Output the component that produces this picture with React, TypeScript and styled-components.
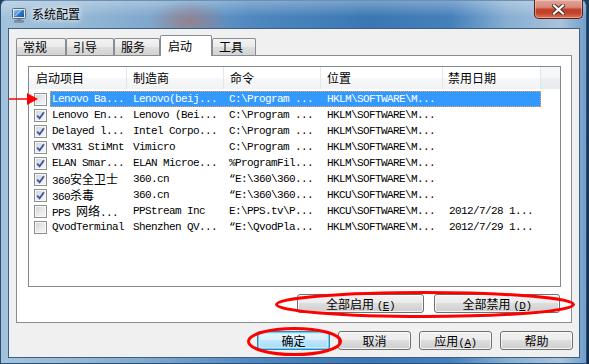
import React from "react";
import styled, { createGlobalStyle } from "styled-components";

const CJK = `"Noto Sans CJK SC", "Noto Sans", sans-serif`;
const MONO = `"Liberation Mono", "DejaVu Sans Mono", monospace`;

const GlobalStyle = createGlobalStyle`
  html, body { margin: 0; padding: 0; }
  body {
    width: 589px;
    height: 364px;
    overflow: hidden;
    background: #17324f;
    font-family: ${CJK};
  }
`;

const Desktop = styled.div`
  position: relative;
  width: 589px;
  height: 364px;
  display: flex;
  background: linear-gradient(#1d3d60, #122a45);
`;

const Window = styled.div`
  box-sizing: border-box;
  width: 587px;
  height: 364px;
  border: 1px solid #2a4f74;
  border-top-color: #6b90b3;
  border-radius: 6px 6px 0 0;
  display: flex;
  flex-direction: column;
  background:
    radial-gradient(ellipse 40px 20px at 188px 20px, rgba(176, 112, 104, 0.6), rgba(176, 112, 104, 0) 100%),
    linear-gradient(to bottom, rgba(255, 255, 255, 0.3) 0px, rgba(255, 255, 255, 0) 16px),
    linear-gradient(to right, #a3c3dd 0px, #97b9d6 70px, #7ea7cd 150px, #5088bf 250px, #3a77b3 370px, #4680ba 450px, #86add2 505px, #a9c3dc 560px, #6e9cc8 587px);
`;

const TitleBar = styled.div`
  height: 27px;
  display: flex;
  align-items: flex-start;
`;

const AppIcon = styled.svg`
  margin: 6px 0 0 10px;
  flex: none;
`;

const TitleText = styled.div`
  margin: 5px 0 0 5px;
  font: 12px/16px ${CJK};
  color: #000;
  text-shadow: 0 0 5px rgba(255, 255, 255, 0.95), 0 0 9px rgba(255, 255, 255, 0.8);
`;

const CloseButton = styled.div`
  box-sizing: border-box;
  margin: -1px 3px 0 auto;
  width: 49px;
  height: 19px;
  border: 1px solid #5a2017;
  border-top: none;
  border-radius: 0 0 5px 5px;
  background: linear-gradient(to bottom, #e2a497 0%, #d68a7b 40%, #c2432c 52%, #c14129 72%, #dc7656 100%);
  box-shadow: inset 0 0 0 1px rgba(255, 220, 210, 0.45);
  display: flex;
  align-items: center;
  justify-content: center;
`;

const Client = styled.div`
  box-sizing: border-box;
  margin-left: 7px;
  width: 572px;
  height: 330px;
  border: 1px solid #3d5f80;
  background: #f0f0f0;
  display: flex;
  flex-direction: column;
  padding: 6px 7px 0 7px;
`;

const TabStrip = styled.div`
  position: relative;
  z-index: 2;
  height: 21px;
  display: flex;
  align-items: flex-end;
`;

const Tab = styled.div<{ $w: number; $active?: boolean }>`
  box-sizing: border-box;
  width: ${(p) => p.$w}px;
  height: ${(p) => (p.$active ? 21 : 17)}px;
  margin-bottom: ${(p) => (p.$active ? 0 : 1)}px;
  padding-left: ${(p) => (p.$active ? 7 : 6)}px;
  border: 1px solid #898c95;
  border-bottom: none;
  border-radius: 2px 2px 0 0;
  background: ${(p) =>
    p.$active
      ? "#ffffff"
      : "linear-gradient(to bottom, #f3f3f3 0%, #ebebeb 50%, #dddddd 51%, #d3d3d3 100%)"};
  font: 12px/${(p) => (p.$active ? 19 : 16)}px ${CJK};
  color: #000;
`;

const Panel = styled.div`
  box-sizing: border-box;
  margin-top: -1px;
  height: 268px;
  border: 1px solid #898c95;
  background: #ffffff;
  display: flex;
  flex-direction: column;
  padding: 10px 10px 0 11px;
`;

const ListView = styled.div`
  box-sizing: border-box;
  width: 533px;
  height: 221px;
  border: 1px solid #828790;
  background: #ffffff;
  display: flex;
  flex-direction: column;
`;

const Header = styled.div`
  display: flex;
  height: 22px;
  background: linear-gradient(to bottom, #ffffff 0%, #ffffff 50%, #f7f8fa 51%, #f1f2f4 100%);
`;

const HeaderCell = styled.div<{ $w: number; $pad: number }>`
  box-sizing: border-box;
  width: ${(p) => p.$w}px;
  padding-left: ${(p) => p.$pad}px;
  border-right: 1px solid #e3e6eb;
  font: 12px/22px ${CJK};
  color: #000;
  white-space: nowrap;
`;

const HeaderFiller = styled.div`
  flex: 1;
  background: linear-gradient(to bottom, #f6f7f9 0%, #f6f7f9 50%, #eceef1 51%, #e8eaed 100%);
`;

const Rows = styled.div`
  padding-top: 2px;
  display: flex;
  flex-direction: column;
`;

const Row = styled.div`
  height: 16px;
  display: flex;
  align-items: center;
`;

const CheckCell = styled.div`
  width: 21px;
  height: 16px;
  display: flex;
  align-items: center;
  padding-left: 5px;
  box-sizing: border-box;
`;

const CheckBox = styled.span`
  box-sizing: border-box;
  width: 13px;
  height: 13px;
  border: 1px solid #8e8f8f;
  background: linear-gradient(135deg, #cdd0d5 0%, #e6e8ea 50%, #f7f7f7 100%);
  box-shadow: inset 0 0 0 1px #f8f8f8;
  display: flex;
  align-items: center;
  justify-content: center;
`;

const Cells = styled.div<{ $sel?: boolean }>`
  display: flex;
  height: 16px;
  background: ${(p) => (p.$sel ? "#3399ff" : "transparent")};
  color: ${(p) => (p.$sel ? "#ffffff" : "#000000")};
  outline: ${(p) => (p.$sel ? "1px dotted #f0a050" : "none")};
  outline-offset: -1px;
`;

const Cell = styled.div<{ $w: number; $pad: number }>`
  box-sizing: border-box;
  width: ${(p) => p.$w}px;
  padding-left: ${(p) => p.$pad}px;
  overflow: hidden;
  white-space: nowrap;
  font: 11px/16px ${MONO};
  letter-spacing: -0.6px;
`;

const Han = styled.span`
  font: 12px/16px ${CJK};
  letter-spacing: 0;
`;

const PanelButtons = styled.div`
  margin-top: 7px;
  padding-right: 1px;
  display: flex;
  justify-content: flex-end;
  gap: 10px;
`;

const BottomButtons = styled.div`
  margin: 8px -1px 0 0;
  display: flex;
  justify-content: flex-end;
  gap: 8px;
`;

const Button = styled.div<{ $w: number; $default?: boolean }>`
  box-sizing: border-box;
  width: ${(p) => p.$w}px;
  height: 19px;
  border: 1px solid ${(p) => (p.$default ? "#3c7fb1" : "#707070")};
  border-radius: 3px;
  background: ${(p) =>
    p.$default
      ? "linear-gradient(to bottom, #eaf6fd 0%, #d9f0fc 49%, #bee6fd 50%, #a7d9f5 100%)"
      : "linear-gradient(to bottom, #f2f2f2 0%, #ebebeb 49%, #dddddd 50%, #cfcfcf 100%)"};
  box-shadow: ${(p) =>
    p.$default ? "inset 0 0 0 1px #5fd3fb, inset 0 0 0 2px #c8ecfb" : "inset 0 0 0 1px rgba(255,255,255,0.75)"};
  font: 12px/17px ${CJK};
  color: #000;
  text-align: center;
  white-space: nowrap;
`;

const Key = styled.span`
  font: 11px/17px ${MONO};
  letter-spacing: -0.5px;
  u { text-underline-offset: 1px; }
`;

const Overlay = styled.svg`
  position: absolute;
  left: 0;
  top: 0;
  pointer-events: none;
`;

const COLS = [
  { w: 98, pad: 7, label: "启动项目" },
  { w: 97, pad: 6, label: "制造商" },
  { w: 97, pad: 6, label: "命令" },
  { w: 122, pad: 6, label: "位置" },
  { w: 98, pad: 5, label: "禁用日期" },
];

const CELL_W = [
  { w: 77, pad: 2 },
  { w: 97, pad: 6 },
  { w: 97, pad: 5 },
  { w: 122, pad: 6 },
  { w: 98, pad: 6 },
];

const HKLM = "HKLM\\SOFTWARE\\M...";
const HKCU = "HKCU\\SOFTWARE\\M...";

const ROWS: { on: boolean; sel?: boolean; c: string[] }[] = [
  { on: false, sel: true, c: ["Lenovo Ba...", "Lenovo(beij...", "C:\\Program ...", HKLM, ""] },
  { on: true, c: ["Lenovo En...", "Lenovo (Bei...", "C:\\Program ...", HKLM, ""] },
  { on: true, c: ["Delayed l...", "Intel Corpo...", "C:\\Program ...", HKLM, ""] },
  { on: true, c: ["VM331 StiMnt", "Vimicro", "C:\\Program ...", HKLM, ""] },
  { on: true, c: ["ELAN Smar...", "ELAN Microe...", "%ProgramFil...", HKLM, ""] },
  { on: true, c: ["360安全卫士", "360.cn", "\u201cE:\\360\\360...", HKLM, ""] },
  { on: true, c: ["360杀毒", "360.cn", "\u201cE:\\360\\360...", HKCU, ""] },
  { on: false, c: ["PPS 网络...", "PPStream Inc", "E:\\PPS.tv\\P...", HKCU, "2012/7/28 1..."] },
  { on: false, c: ["QvodTerminal", "Shenzhen QV...", "\u201cE:\\QvodPla...", HKLM, "2012/7/29 1..."] },
];

function mixed(text: string) {
  const parts = text.split(/([\u4e00-\u9fff]+)/);
  return parts.map((p, i) =>
    /[\u4e00-\u9fff]/.test(p) ? <Han key={i}>{p}</Han> : <React.Fragment key={i}>{p}</React.Fragment>
  );
}

const CheckMark = () => (
  <svg width="9" height="9" viewBox="0 0 9 9">
    <path d="M1.2 4.6 L3.6 7.3 L7.9 1.2" fill="none" stroke="#3d5a9e" strokeWidth="1.9" strokeLinejoin="miter" />
  </svg>
);

const Accel = ({ k }: { k: string }) => (
  <Key>
    (<u>{k}</u>)
  </Key>
);

export default function App() {
  return (
    <>
      <GlobalStyle />
      <Desktop>
        <Window>
          <TitleBar>
            <AppIcon width="16" height="16" viewBox="0 0 16 16">
              <defs>
                <linearGradient id="scr" x1="0" y1="0" x2="1" y2="1">
                  <stop offset="0" stopColor="#9fd0f6" />
                  <stop offset="0.5" stopColor="#2f7fd0" />
                  <stop offset="1" stopColor="#1a4f9c" />
                </linearGradient>
              </defs>
              <rect x="1.5" y="1.5" width="13" height="10" rx="1" fill="#e4e9ef" stroke="#5b6a7d" />
              <rect x="3" y="3" width="10" height="7" fill="url(#scr)" />
              <path d="M3 9 L9 3 L11 3 L5 9 Z" fill="rgba(255,255,255,0.45)" />
              <rect x="6" y="12" width="4" height="1.5" fill="#7c8898" />
              <rect x="3.5" y="13.5" width="9" height="1.8" rx="0.5" fill="#8e9aab" stroke="#5b6a7d" strokeWidth="0.6" />
            </AppIcon>
            <TitleText>系统配置</TitleText>
            <CloseButton>
              <svg width="13" height="11" viewBox="0 0 13 11">
                <path d="M2 1.5 L11 9.5 M11 1.5 L2 9.5" stroke="#4a2a26" strokeWidth="4" strokeLinecap="square" />
                <path d="M2 1.5 L11 9.5 M11 1.5 L2 9.5" stroke="#ffffff" strokeWidth="2.2" strokeLinecap="square" />
              </svg>
            </CloseButton>
          </TitleBar>
          <Client>
            <TabStrip>
              <Tab $w={50}>常规</Tab>
              <Tab $w={48}>引导</Tab>
              <Tab $w={46}>服务</Tab>
              <Tab $w={52} $active>
                启动
              </Tab>
              <Tab $w={44}>工具</Tab>
            </TabStrip>
            <Panel>
              <ListView>
                <Header>
                  {COLS.map((c) => (
                    <HeaderCell key={c.label} $w={c.w} $pad={c.pad}>
                      {c.label}
                    </HeaderCell>
                  ))}
                  <HeaderFiller />
                </Header>
                <Rows>
                  {ROWS.map((r, i) => (
                    <Row key={i}>
                      <CheckCell>
                        <CheckBox>{r.on && <CheckMark />}</CheckBox>
                      </CheckCell>
                      <Cells $sel={r.sel}>
                        {r.c.map((t, j) => (
                          <Cell key={j} $w={CELL_W[j].w} $pad={CELL_W[j].pad}>
                            {mixed(t)}
                          </Cell>
                        ))}
                      </Cells>
                    </Row>
                  ))}
                </Rows>
              </ListView>
              <PanelButtons>
                <Button $w={127}>
                  全部启用 <Accel k="E" />
                </Button>
                <Button $w={126}>
                  全部禁用 <Accel k="D" />
                </Button>
              </PanelButtons>
            </Panel>
            <BottomButtons>
              <Button $w={73} $default>
                确定
              </Button>
              <Button $w={73}>取消</Button>
              <Button $w={73}>
                应用<Accel k="A" />
              </Button>
              <Button $w={73}>帮助</Button>
            </BottomButtons>
          </Client>
        </Window>
        <Overlay width="589" height="364" viewBox="0 0 589 364">
          <ellipse cx="425" cy="304.5" rx="148.5" ry="12" fill="none" stroke="#ff0000" strokeWidth="3" />
          <ellipse cx="294.5" cy="341.5" rx="46" ry="13" fill="none" stroke="#ff0000" strokeWidth="3" />
          <line x1="9" y1="99" x2="29" y2="99" stroke="#ff0000" strokeWidth="1.5" />
          <polygon points="27,93 38,99 27,105" fill="#ff0000" />
        </Overlay>
      </Desktop>
    </>
  );
}
